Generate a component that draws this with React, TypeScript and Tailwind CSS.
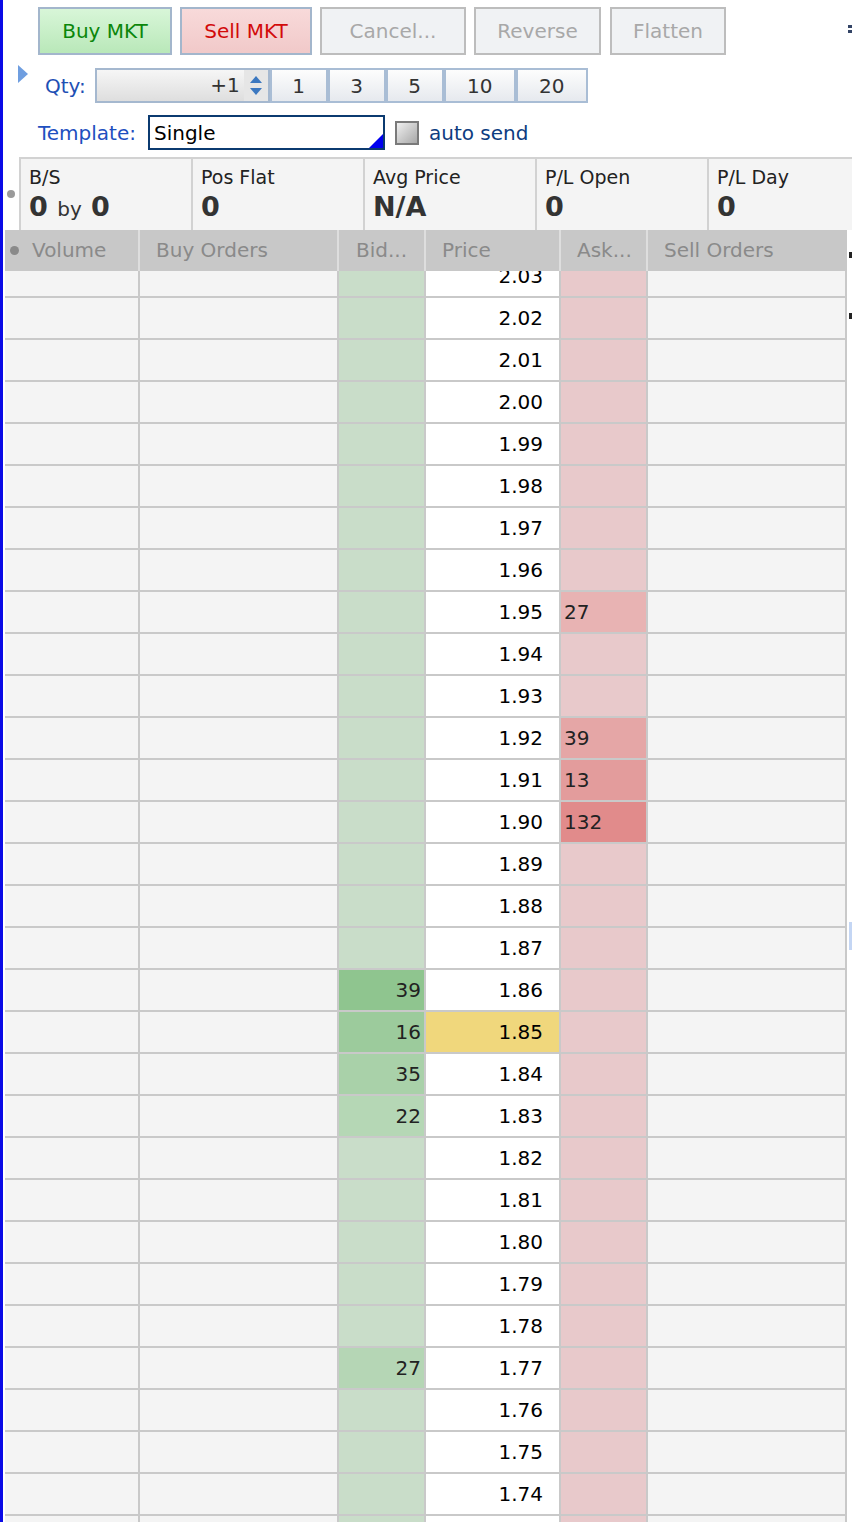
import React from 'react';

type Level = { price: string; bid?: number; ask?: number; bidBg?: string; askBg?: string; last?: boolean };

const prices = Array.from({ length: 31 }, (_, i) => (2.03 - i * 0.01).toFixed(2));

const bids: Record<string, [number, string]> = {
    '1.86': [39, 'bg-[#8fc58f]'],
    '1.85': [16, 'bg-[#9ccb9c]'],
    '1.84': [35, 'bg-[#a9d1a9]'],
    '1.83': [22, 'bg-[#b5d7b5]'],
    '1.77': [27, 'bg-[#b5d6b5]'],
};

const asks: Record<string, [number, string]> = {
    '1.95': [27, 'bg-[#e8b3b3]'],
    '1.92': [39, 'bg-[#e5a6a6]'],
    '1.91': [13, 'bg-[#e39c9c]'],
    '1.90': [132, 'bg-[#e18b8b]'],
};

const levels: Level[] = prices.map(p => ({
    price: p,
    bid: bids[p]?.[0],
    bidBg: bids[p]?.[1],
    ask: asks[p]?.[0],
    askBg: asks[p]?.[1],
    last: p === '1.85',
}));

const font = { fontFamily: '"DejaVu Sans", Verdana, sans-serif' };

const TopButton = ({ label, className }: { label: string; className: string }) => (
    <div className={`h-[48px] flex items-center justify-center border-2 text-[20px] ${className}`}>{label}</div>
);

const QtyButton = ({ label, w }: { label: string; w: string }) => (
    <div className={`${w} h-full flex items-center justify-center border-2 border-[#a9bdd5] bg-gradient-to-b from-[#fdfdfd] to-[#e6e9ee] text-[20px] text-[#333]`}>
        {label}
    </div>
);

const Stat = ({ label, children, last }: { label: string; children: React.ReactNode; last?: boolean }) => (
    <div className={`flex flex-col pl-[8px] pt-[5px] ${last ? 'flex-1' : 'w-[172px] border-r-2 border-[#d2d2d2]'}`}>
        <span className="text-[19px] leading-[26px] text-[#222]">{label}</span>
        <span className="text-[27px] leading-[34px] font-bold text-[#333]">{children}</span>
    </div>
);

export default function App() {
    return (
        <div className="w-[852px] h-[1522px] overflow-hidden flex bg-white" style={font}>
            <div className="w-[3px] h-full bg-[#0a0ae6]" />
            <div className="relative flex-1 flex flex-col">
                {/* toolbar */}
                <div className="flex gap-2 pt-[7px] pl-[35px]">
                    <TopButton label="Buy MKT" className="w-[134px] border-[#a3b6cc] bg-gradient-to-b from-[#d8f6d8] to-[#b9e8b9] text-[#0b860b]" />
                    <TopButton label="Sell MKT" className="w-[132px] border-[#a3b6cc] bg-gradient-to-b from-[#f8dada] to-[#f1c9c9] text-[#d20a0a]" />
                    <TopButton label="Cancel..." className="w-[146px] border-[#bdbdbd] bg-[#f0f2f4] text-[#a8a8a8]" />
                    <TopButton label="Reverse" className="w-[127px] border-[#bdbdbd] bg-[#f0f2f4] text-[#a8a8a8]" />
                    <TopButton label="Flatten" className="w-[116px] ml-px border-[#bdbdbd] bg-[#f0f2f4] text-[#a8a8a8]" />
                </div>
                <div className="absolute right-0 top-[25px] flex flex-col gap-[2px]">
                    <div className="w-[4px] h-[3px] bg-[#334466]" />
                    <div className="w-[4px] h-[3px] bg-[#334466]" />
                </div>

                {/* qty row */}
                <div className="flex items-stretch h-[35px] mt-[13px]">
                    <svg width="12" height="22" viewBox="0 0 12 22" className="ml-[14px] -mt-[4px] self-start">
                        <path d="M1 1 L11 10 L1 19 Z" fill="#6f9ee0" />
                    </svg>
                    <span className="ml-[16px] mt-px text-[20px] text-[#1e50b4] leading-[35px]">Qty:</span>
                    <div className="ml-[9px] w-[175px] h-full flex border-2 border-[#a5b8cf] bg-gradient-to-b from-[#f6f6f6] to-[#dedede]">
                        <span className="flex-1 text-right pr-[4px] text-[20px] leading-[31px] text-[#333]">+1</span>
                        <div className="w-[24px] flex flex-col items-center justify-center gap-[5px] bg-[#e6e6e6]">
                            <svg width="12" height="7" viewBox="0 0 12 7"><path d="M0 7 L6 0 L12 7 Z" fill="#3c78c0" /></svg>
                            <svg width="12" height="7" viewBox="0 0 12 7"><path d="M0 0 L6 7 L12 0 Z" fill="#3c78c0" /></svg>
                        </div>
                    </div>
                    <QtyButton label="1" w="w-[58px]" />
                    <QtyButton label="3" w="w-[58px]" />
                    <QtyButton label="5" w="w-[58px]" />
                    <QtyButton label="10" w="w-[72px]" />
                    <QtyButton label="20" w="w-[72px]" />
                </div>

                {/* template row */}
                <div className="flex items-center h-[35px] mt-[12px] pl-[35px]">
                    <span className="text-[20px] text-[#1e50c0]">Template:</span>
                    <div className="relative ml-[12px] w-[237px] h-[35px] border-2 border-[#0b3a70] bg-white flex items-center pl-[4px] text-[20px] text-black">
                        Single
                        <svg width="14" height="14" viewBox="0 0 14 14" className="absolute right-0 bottom-0">
                            <path d="M0 14 L14 0 L14 14 Z" fill="#0000f0" />
                        </svg>
                    </div>
                    <div className="ml-[10px] w-[24px] h-[24px] border-2 border-[#7a7a7a] bg-gradient-to-br from-[#f0f0f0] to-[#a8a8a8]" />
                    <span className="ml-[10px] text-[20px] text-[#0d3c80]">auto send</span>
                </div>

                {/* stats bar */}
                <div className="flex h-[73px] mt-[7px]">
                    <div className="w-[16px] flex items-center justify-center">
                        <div className="w-[8px] h-[8px] rounded-full bg-[#9a9a9a]" />
                    </div>
                    <div className="flex-1 flex border-t-2 border-l-2 border-[#d2d2d2] bg-[#f4f4f4]">
                        <Stat label="B/S">
                            0 <span className="text-[20px] font-normal">by</span> 0
                        </Stat>
                        <Stat label="Pos Flat">0</Stat>
                        <Stat label="Avg Price">N/A</Stat>
                        <Stat label="P/L Open">0</Stat>
                        <Stat label="P/L Day" last>0</Stat>
                    </div>
                </div>

                {/* ladder header */}
                <div className="flex h-[41px] ml-[2px] text-[20px] text-[#8a8a8a] leading-[41px]">
                    <div className="w-[135px] bg-[#c8c8c8] border-r-2 border-[#dedede] flex items-center">
                        <div className="ml-[5px] w-[9px] h-[9px] rounded-full bg-[#8a8a8a]" />
                        <span className="ml-[13px]">Volume</span>
                    </div>
                    <div className="w-[199px] bg-[#c8c8c8] border-r-2 border-[#dedede] pl-[16px]">Buy Orders</div>
                    <div className="w-[87px] bg-[#c8c8c8] border-r-2 border-[#dedede] pl-[17px]">Bid...</div>
                    <div className="w-[135px] bg-[#c8c8c8] border-r-2 border-[#dedede] pl-[16px]">Price</div>
                    <div className="w-[87px] bg-[#c8c8c8] border-r-2 border-[#dedede] pl-[16px]">Ask...</div>
                    <div className="w-[199px] bg-[#c8c8c8] pl-[16px]">Sell Orders</div>
                </div>

                {/* ladder rows */}
                <div className="flex-1 overflow-hidden ml-[2px]">
                    <div className="-mt-[15px] flex flex-col text-[20px] text-[#222]">
                        {levels.map(l => (
                            <div key={l.price} className="flex h-[42px] border-b-2 border-[#c9c9c9] w-[842px]">
                                <div className="w-[135px] bg-[#f4f4f4] border-r-2 border-[#c9c9c9]" />
                                <div className="w-[199px] bg-[#f4f4f4] border-r-2 border-[#c9c9c9]" />
                                <div className={`w-[87px] border-r-2 border-[#c9c9c9] text-right pr-[3px] leading-[40px] ${l.bidBg ?? 'bg-[#c9ddc9]'}`}>
                                    {l.bid}
                                </div>
                                <div className={`w-[135px] border-r-2 border-[#c9c9c9] text-right pr-[16px] leading-[40px] text-black ${l.last ? 'bg-[#f0d77c]' : 'bg-white'}`}>
                                    {l.price}
                                </div>
                                <div className={`w-[87px] border-r-2 border-[#c9c9c9] pl-[3px] leading-[40px] ${l.askBg ?? 'bg-[#e8c9cb]'}`}>
                                    {l.ask}
                                </div>
                                <div className="w-[199px] bg-[#f4f4f4] border-r-2 border-[#c9c9c9]" />
                            </div>
                        ))}
                    </div>
                </div>
                <div className="absolute right-0 top-[252px] w-[3px] h-[6px] bg-[#222]" />
                <div className="absolute right-0 top-[313px] w-[3px] h-[6px] bg-[#222]" />
                <div className="absolute right-0 top-[922px] w-[3px] h-[28px] bg-[#c4d6f4]" />
            </div>
        </div>
    );
}
